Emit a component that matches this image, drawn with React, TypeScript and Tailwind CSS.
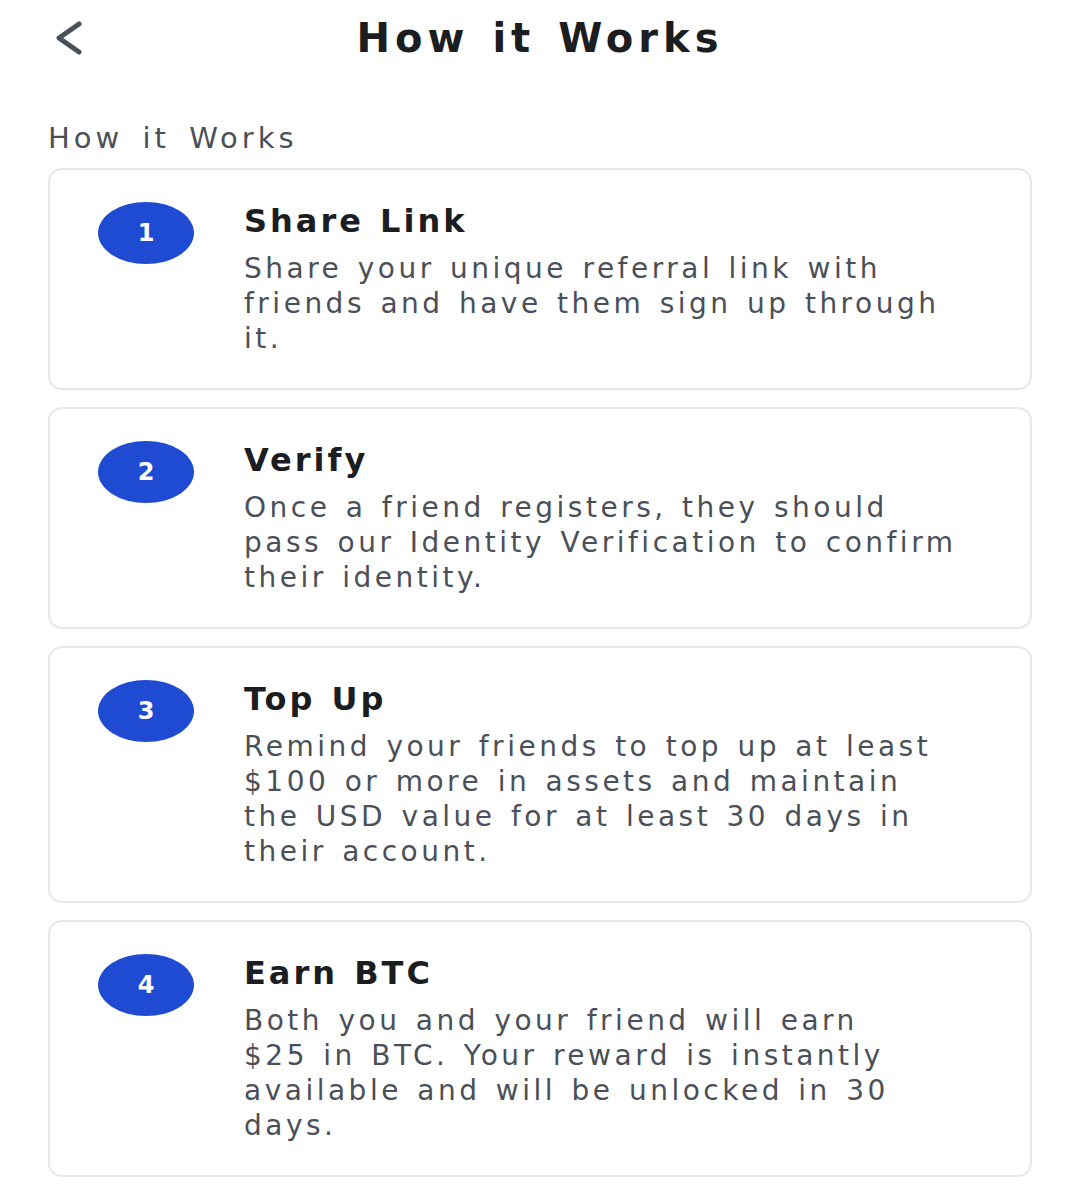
const steps = [
  {
    n: "1",
    title: "Share Link",
    lines: ["Share your unique referral link with", "friends and have them sign up through", "it."],
  },
  {
    n: "2",
    title: "Verify",
    lines: [
      "Once a friend registers, they should",
      "pass our Identity Verification to confirm",
      "their identity.",
    ],
  },
  {
    n: "3",
    title: "Top Up",
    lines: [
      "Remind your friends to top up at least",
      "$100 or more in assets and maintain",
      "the USD value for at least 30 days in",
      "their account.",
    ],
  },
  {
    n: "4",
    title: "Earn BTC",
    lines: [
      "Both you and your friend will earn",
      "$25 in BTC. Your reward is instantly",
      "available and will be unlocked in 30",
      "days.",
    ],
  },
];

function ChevronLeft() {
  return (
    <svg width="32" height="34" viewBox="0 0 32 34" fill="none">
      <path
        d="M26 3 L6 17 L26 31"
        stroke="#4b5058"
        strokeWidth="5"
        strokeLinecap="round"
        strokeLinejoin="round"
      />
    </svg>
  );
}

function StepCard({ n, title, lines }: { n: string; title: string; lines: string[] }) {
  return (
    <div className="flex rounded-[14px] border-2 border-[#e6e8eb] bg-white pl-[48px] pr-[40px] pt-[32px] pb-[32px]">
      <div className="flex h-[62px] w-[96px] shrink-0 items-center justify-center rounded-[50%] bg-[#1e4bd2] text-[24px] font-bold text-white">
        {n}
      </div>
      <div className="ml-[50px] flex-1">
        <h3 className="text-[32px] font-semibold leading-[38px] tracking-[3px] [word-spacing:2px] text-[#1b1d20]">
          {title}
        </h3>
        <p className="mt-[11px] text-[28px] leading-[35px] tracking-[3.5px] [word-spacing:3px] text-[#4b5058]">
          {lines.map((l) => (
            <span key={l} className="block whitespace-nowrap">
              {l}
            </span>
          ))}
        </p>
      </div>
    </div>
  );
}

export default function App() {
  return (
    <div
      className="min-h-screen bg-white"
      style={{ fontFamily: '"DejaVu Sans", "Liberation Sans", sans-serif' }}
    >
      <div className="relative flex h-[76px] items-center justify-center">
        <button className="absolute left-[53px] top-[21px]">
          <ChevronLeft />
        </button>
        <h1 className="text-[40px] font-bold tracking-[5px] [word-spacing:4px] text-[#1b1d20]">
          How it Works
        </h1>
      </div>
      <div className="px-[48px]">
        <p className="mt-[46px] text-[29px] leading-[32px] tracking-[4px] [word-spacing:6px] text-[#4b5058]">
          How it Works
        </p>
        <div className="mt-[14px] flex flex-col gap-[17px]">
          {steps.map((s) => (
            <StepCard key={s.n} {...s} />
          ))}
        </div>
      </div>
    </div>
  );
}
